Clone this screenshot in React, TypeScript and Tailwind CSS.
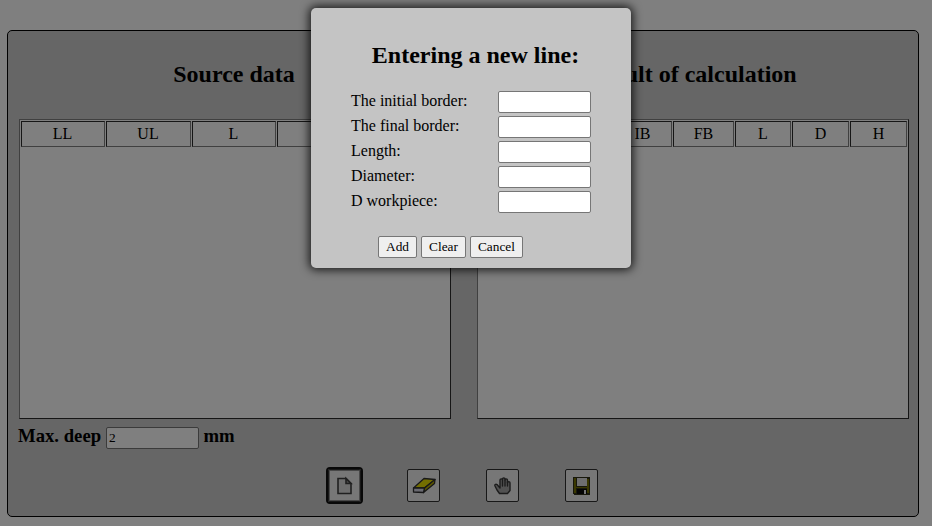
import type { ReactNode } from 'react';

const raised = 'border border-t-[#808080] border-l-[#808080] border-r-[#2c2c2c] border-b-[#2c2c2c]';
const sunken = 'border border-t-[#2c2c2c] border-l-[#2c2c2c] border-r-[#808080] border-b-[#808080]';
const field = 'h-[22px] w-[93px] rounded-[2px] border border-[#767676] bg-white text-[13.333px] leading-[18px] outline-none';

function DataTable({ columns, grid, cell = '' }: { columns: string[]; grid: string; cell?: string }) {
  return (
    <div className={`h-[300px] w-[432px] bg-white p-px ${raised}`}>
      <div className={`grid gap-px ${grid}`}>
        {columns.map((name, i) => (
          <div key={i} className={`h-[26px] text-center text-[16px] leading-[24px] ${cell} ${sunken}`}>
            {name}
          </div>
        ))}
      </div>
    </div>
  );
}

function ToolButton({ label, focused, children }: { label: string; focused?: boolean; children: ReactNode }) {
  return (
    <button
      aria-label={label}
      className={`flex h-[33px] w-[33px] items-center justify-center rounded-[2px] border border-[#303030] bg-[#efefef] ${
        focused ? 'outline outline-2 outline-[#101010] shadow-[inset_0_0_0_1px_#909090]' : ''
      }`}
    >
      {children}
    </button>
  );
}

function PageIcon() {
  return (
    <svg width="24" height="24" viewBox="0 0 24 24" fill="none" stroke="#404040" strokeWidth="1.6">
      <path d="M5 4.500h8l5 5v10H5z" fill="#dcdcdc" />
      <path d="M13 4.500v5h5z" fill="#999" />
    </svg>
  );
}

function EraserIcon() {
  return (
    <svg width="24" height="24" viewBox="0 0 24 24" stroke="#303030" strokeWidth="1.3" strokeLinejoin="round">
      <path d="M1.500 14 12 4.500 23 5.500 12.500 14z" fill="#e6dc00" />
      <path d="M12.500 14 23 5.500 22.500 9.500 11.500 18.500z" fill="#b8ae00" />
      <path d="M1.500 14 12.500 14 11.500 18.500 1.500 18z" fill="#d5d5e2" />
    </svg>
  );
}

function HandIcon() {
  return (
    <svg width="24" height="24" viewBox="0 0 24 24" stroke="#393939" strokeWidth="1.4" strokeLinejoin="round" strokeLinecap="round">
      <path
        d="M8.5 19.5h8l2.500-3V8.700c0-1.400-2.500-1.400-2.500 0V6c0-1.500-2.500-1.500-2.500 0V5c0-1.500-2.500-1.500-2.500 0v.8C11.500 4.500 9 4.500 9 6v8L6 10.500c-1.500-.8-2.500.3-2 1.500L6 16z"
        fill="#a4a4a4"
      />
      <path d="M11.500 6v6M14 6v6M16.500 8v4" fill="none" />
    </svg>
  );
}

function SaveIcon() {
  return (
    <svg width="24" height="24" viewBox="0 0 24 24" shapeRendering="crispEdges">
      <path d="M3 3h17v18H4l-1-1z" fill="#303018" />
      <path d="M4 4h2v15H4zM17 5h2v14h-2zM6 13h11v1H6z" fill="#757000" />
      <path d="M7 4h10v8H7z" fill="#dedede" />
      <path d="M7 15h10v5H7z" fill="#080808" />
      <path d="M14 16h2v4h-2z" fill="#e8e8e8" />
    </svg>
  );
}

function EntryDialog() {
  const labels = ['The initial border:', 'The final border:', 'Length:', 'Diameter:', 'D workpiece:'];
  return (
    <div
      role="dialog"
      className="absolute left-[311px] top-2 h-[260px] w-[320px] rounded-[5px] bg-[#c4c4c4] pt-[33px] pr-10 pl-10 shadow-[0_0_10px_2px_rgba(0,0,0,0.8)]"
    >
      <h2 className="ml-[9px] text-center text-[24px] leading-[28px] font-bold">Entering a new line:</h2>
      <div className="mt-[22px] flex flex-col gap-[3px]">
        {labels.map((label) => (
          <label key={label} className="flex h-[22px] text-[16px] leading-[20px]">
            <span className="w-[147px]">{label}</span>
            <input className={`${field} px-[3px]`} />
          </label>
        ))}
      </div>
      <div className="mt-[23px] ml-[27px] flex gap-1 text-[13.333px] leading-[20px]">
        <button className="h-[22px] w-[39px] rounded-[2px] border border-[#767676] bg-[#efefef]">Add</button>
        <button className="h-[22px] w-[45px] rounded-[2px] border border-[#767676] bg-[#efefef]">Clear</button>
        <button className="h-[22px] w-[53px] rounded-[2px] border border-[#767676] bg-[#efefef]">Cancel</button>
      </div>
    </div>
  );
}

export default function App() {
  return (
    <div className="relative h-[526px] w-[932px] overflow-hidden bg-white pt-[30px] pl-[7px] font-['Liberation_Serif','Times_New_Roman',serif] text-black">
      <main className="h-[487px] w-[912px] rounded-[5px] border border-black bg-[#cccccc] pt-[29px]">
        <div className="flex gap-[26px] pl-[11px]">
          <section className="w-[432px]">
            <h2 className="mb-[31px] pr-[2px] text-center text-[24px] leading-[28px] font-bold">Source data</h2>
            <DataTable columns={['LL', 'UL', 'L', '', '']} grid="grid-cols-[84px_85px_84px_85px_86px]" cell="pr-px" />
          </section>
          <section className="w-[432px]">
            <h2 className="mb-[31px] pr-[2px] text-center text-[24px] leading-[28px] font-bold">Result of calculation</h2>
            <DataTable
              columns={['', '', 'IB', 'FB', 'L', 'D', 'H']}
              grid="grid-cols-[66px_66px_59px_61px_56px_57px_57px]"
            />
          </section>
        </div>
        <div className="mt-2 flex h-[22px] pl-[10px] text-[18.72px] leading-[18px] font-bold">
          <label htmlFor="deep" className="w-[88px]">Max. deep</label>
          <input id="deep" defaultValue="2" className={`${field} px-[2px] font-normal`} />
          <span className="ml-[4.500px]">mm</span>
        </div>
        <div className="mt-5 flex gap-[46px] pl-[320px]">
          <ToolButton label="New line" focused><PageIcon /></ToolButton>
          <ToolButton label="Erase"><EraserIcon /></ToolButton>
          <ToolButton label="Move"><HandIcon /></ToolButton>
          <ToolButton label="Save"><SaveIcon /></ToolButton>
        </div>
      </main>
      <div className="absolute inset-0 bg-black/50" />
      <EntryDialog />
    </div>
  );
}
